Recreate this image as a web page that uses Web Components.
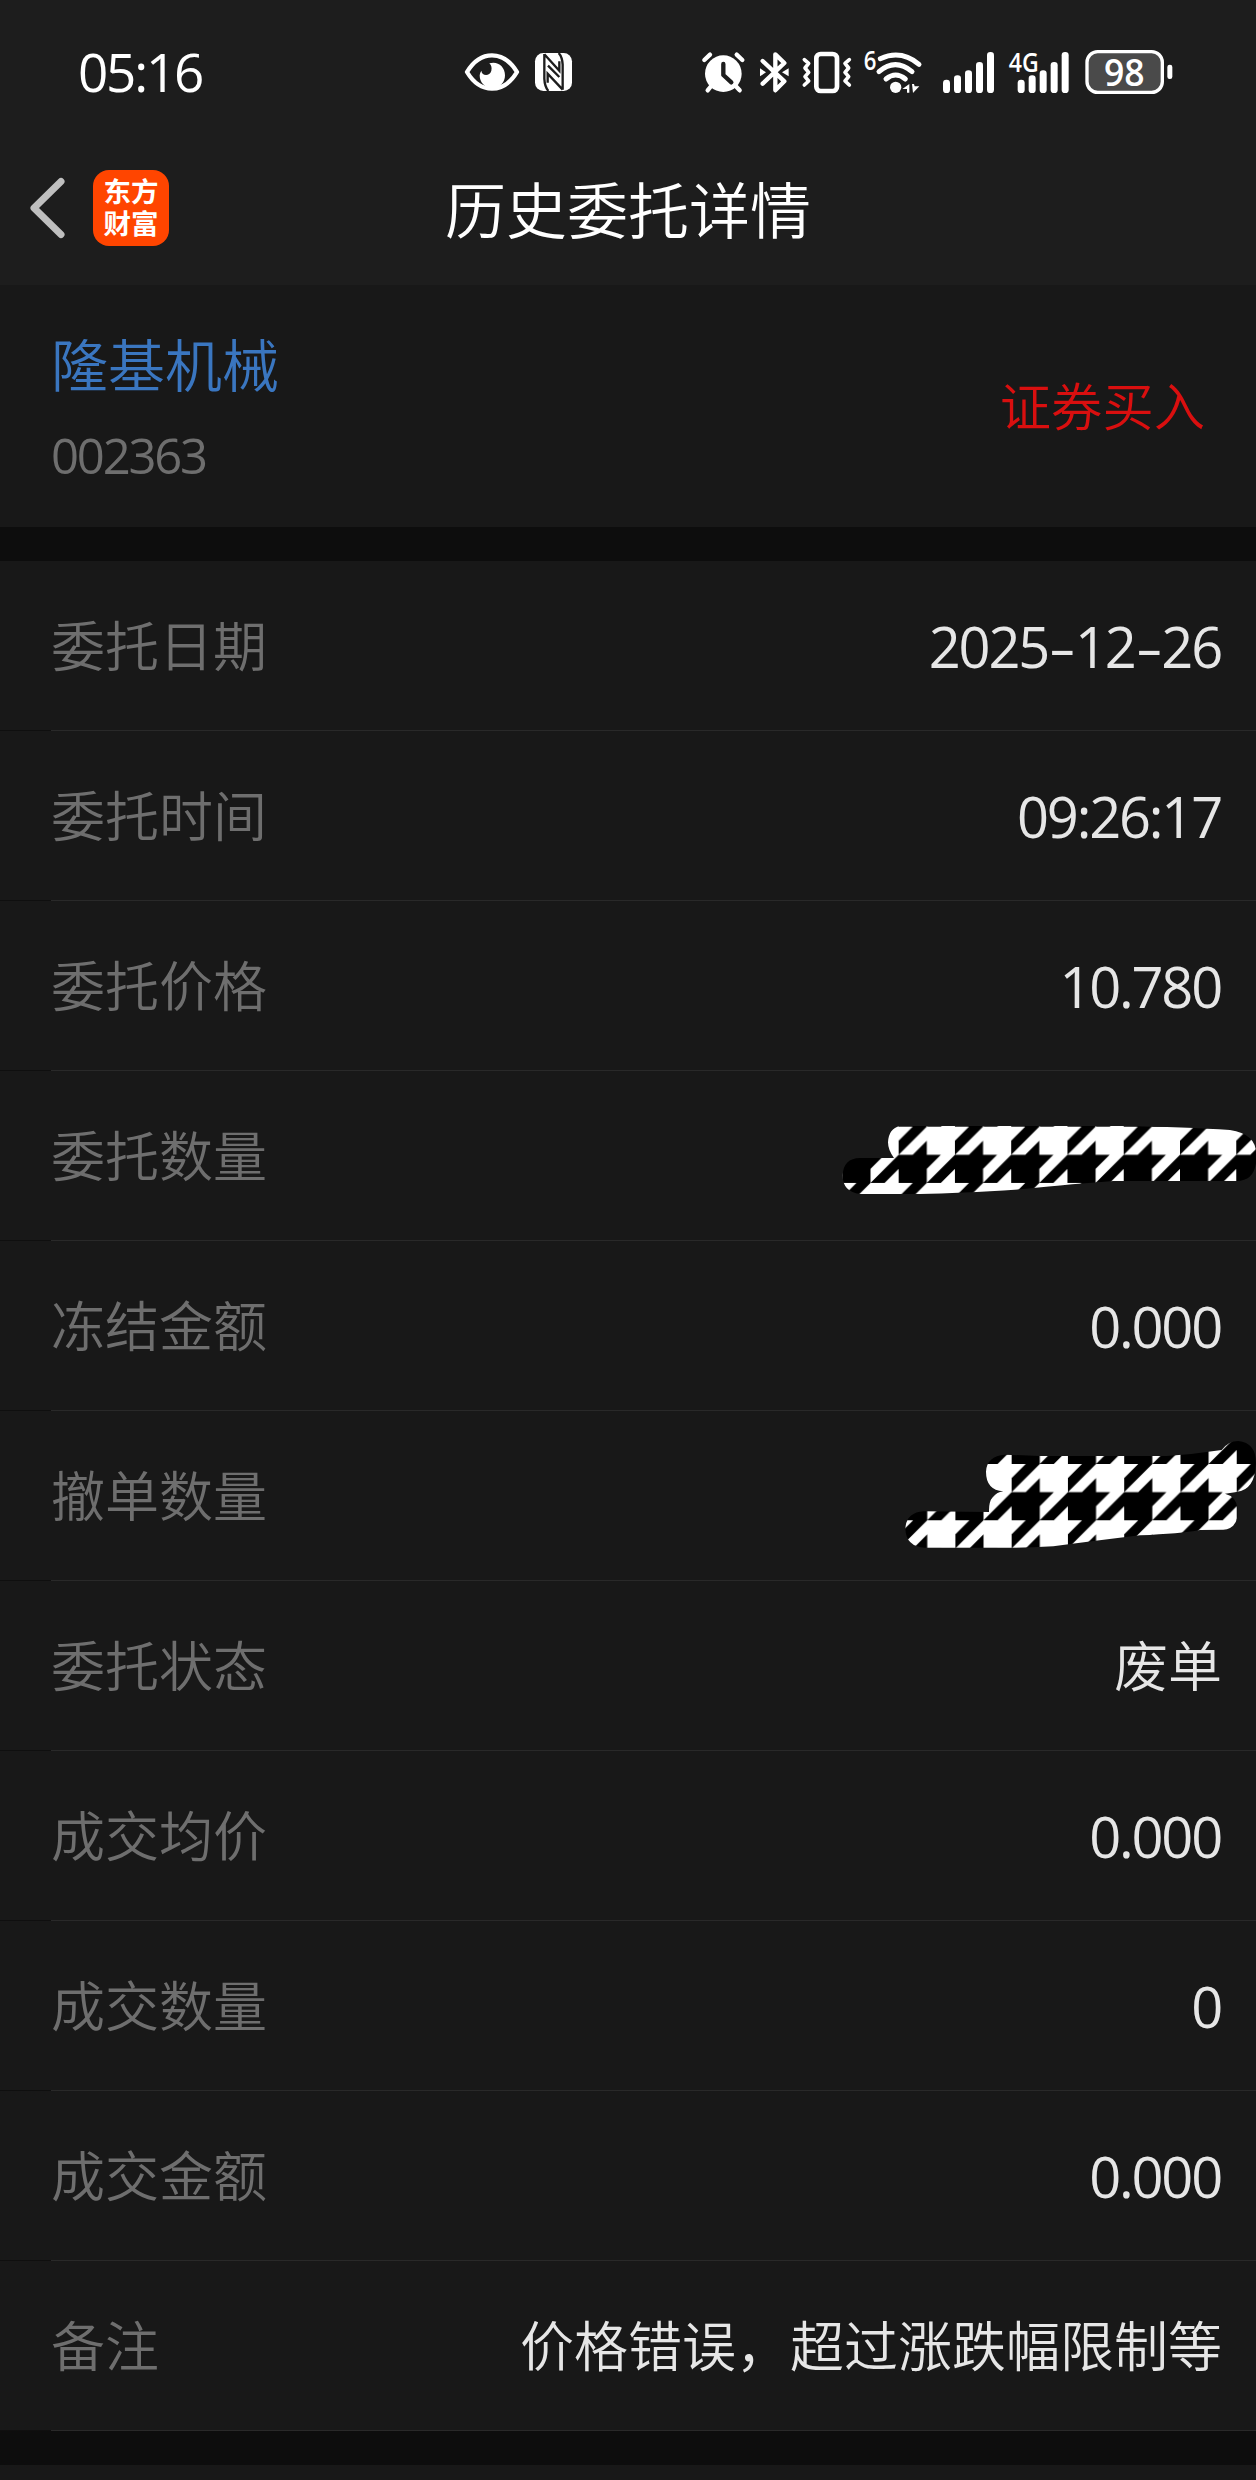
<!DOCTYPE html>
<html lang="zh-CN">
<head>
<meta charset="utf-8">
<title>历史委托详情</title>
<style>
	body {
		margin: 0;
		background: #181818;
		color: #e6e6e6;
		font-family: "Noto Sans CJK SC", sans-serif;
		font-weight: 350;
	}
	.dash {
		display: inline-block;
		transform: scaleX(1.5);
		padding: 0 6px 0 5px;
	}
</style>
</head>
<body>
<order-page>
	<status-bar time="05:16" battery="98"></status-bar>
	<nav-bar>历史委托详情</nav-bar>
	<stock-head code="002363">
		隆基机械
		<span slot="side">证券买入</span>
	</stock-head>
	<section-gap></section-gap>
	<detail-row label="委托日期" numeric>2025<span class="dash">-</span>12<span class="dash">-</span>26</detail-row>
	<detail-row label="委托时间" numeric>09:26:17</detail-row>
	<detail-row label="委托价格" numeric>10.780</detail-row>
	<detail-row label="委托数量"><brush-mask shape="amount"></brush-mask></detail-row>
	<detail-row label="冻结金额" numeric>0.000</detail-row>
	<detail-row label="撤单数量"><brush-mask shape="cancel"></brush-mask></detail-row>
	<detail-row label="委托状态">废单</detail-row>
	<detail-row label="成交均价" numeric>0.000</detail-row>
	<detail-row label="成交数量" numeric>0</detail-row>
	<detail-row label="成交金额" numeric>0.000</detail-row>
	<detail-row label="备注">价格错误，超过涨跌幅限制等</detail-row>
	<section-gap></section-gap>
</order-page>

<script>
class BaseElement extends HTMLElement {
	constructor() {
		super();
		this.attachShadow({ mode: 'open' });
	}

	connectedCallback() {
		this.render();
	}

	render() {
		this.shadowRoot.innerHTML = `
			<style>${this.css()}</style>
			${this.template()}
		`;
	}

	css() {
		return '';
	}

	template() {
		return '<slot></slot>';
	}
}

class OrderPage extends BaseElement {
	css() {
		return `
			:host {
				display: flex;
				flex-direction: column;
				width: 1256px;
				height: 2480px;
				overflow: hidden;
				background: #181818;
			}
		`;
	}
}

class StatusBar extends BaseElement {
	css() {
		return `
			:host {
				display: flex;
				align-items: center;
				flex: none;
				height: 144px;
				box-sizing: border-box;
				padding: 0 83px 0 78px;
				background: #1d1d1d;
				color: #fff;
			}
			.time {
				width: 387px;
				font-family: "Open Sans", sans-serif;
				font-size: 53px;
				line-height: 60px;
				font-weight: 500;
				letter-spacing: -2.200px;
				white-space: nowrap;
			}
			.group {
				display: flex;
				align-items: center;
			}
			.left {
				gap: 16px;
			}
			.right {
				margin-left: auto;
			}
			svg {
				display: block;
				flex: none;
				overflow: visible;
				fill: #fff;
			}
			text {
				font-family: "Open Sans", sans-serif;
				font-weight: 600;
			}
		`;
	}

	// Every glyph is drawn on a grid of three units to the pixel.
	bars(x) {
		const tops = [148, 135, 120, 95, 65];
		return tops.map((top, i) =>
			`<rect x="${x + i * 33}" y="${top}" width="21" height="${188 - top}" rx="10"/>`
		).join('');
	}

	template() {
		return `
			<div class="time">${this.getAttribute('time')}</div>
			<div class="group left">
				<svg width="54" height="38" viewBox="30 40 162 112">
					<path d="M36 96C57 61 84 46 111 46S165 61 186 96C165 131 138 146 111 146S57 131 36 96Z" fill="none" stroke="#fff" stroke-width="13" stroke-linejoin="round"/>
					<path d="M103 70C128 62 150 80 150 106C150 126 136 144 112 144S74 126 74 106Q75 98 79 92C80 108 104 110 109 92Q112 78 103 70Z"/>
				</svg>
				<svg width="37" height="38" viewBox="240 39 111 114">
					<rect x="240" y="39" width="111" height="114" rx="25"/>
					<path d="M268 42V116Q269 140 280 153M268 43L313 92V64M323 149V74Q322 51 311 39M323 149L278 101V128M279 77L313 111" fill="none" stroke="#1d1d1d" stroke-width="7"/>
				</svg>
			</div>
			<div class="group right">
				<svg width="44" height="42" viewBox="66 62 132 126">
					<circle cx="130" cy="130" r="55"/>
					<path d="M73 89L90 73M187 89L170 73M96 164L83 180M164 164L179 180" stroke="#fff" stroke-width="13" stroke-linecap="round"/>
					<path d="M130 101V134L154 156" fill="none" stroke="#1d1d1d" stroke-width="13" stroke-linecap="round" stroke-linejoin="round"/>
				</svg>
				<svg width="28" height="42" viewBox="240 62 84 126" style="margin-left:14px">
					<path d="M248 92L313 153L286 180V72L313 98L248 160" fill="none" stroke="#fff" stroke-width="13" stroke-linecap="round" stroke-linejoin="round"/>
					<path d="M240 114L258 126L240 138ZM326 114L306 126L326 138Z"/>
				</svg>
				<svg width="50" height="42" viewBox="365 62 150 126" style="margin-left:14px">
					<rect x="408" y="71" width="62" height="111" rx="13" fill="none" stroke="#fff" stroke-width="14"/>
					<path d="M372 88L385 99L374 113L385 126L374 139L385 152L372 164M507 88L494 99L505 113L494 126L505 139L494 152L507 164" fill="none" stroke="#fff" stroke-width="11" stroke-linecap="round" stroke-linejoin="round"/>
				</svg>
				<svg width="58" height="42" viewBox="552 62 174 126" style="margin-left:12px">
					<text x="551" y="119" font-size="80" textLength="38" lengthAdjust="spacingAndGlyphs">6</text>
					<path d="M601 85Q663 57 717 102M597 124Q646 82 696 124M618 146Q647 122 676 146" fill="none" stroke="#fff" stroke-width="15" stroke-linecap="round"/>
					<circle cx="647" cy="171" r="17"/>
					<path d="M667 176L688 161V187H681V176ZM696 161H702L704 168H718L699 188Z"/>
				</svg>
				<svg width="51" height="42" viewBox="39 62 153 126" style="margin-left:21px">
					${this.bars(39)}
				</svg>
				<svg width="60" height="42" viewBox="239 62 180 126" style="margin-left:15px">
					<text x="238" y="124" font-size="80" textLength="90" lengthAdjust="spacingAndGlyphs">4G</text>
					${this.bars(265)}
				</svg>
				<svg width="88" height="44" viewBox="464 60 264 132" style="margin-left:16px">
					<rect x="470" y="65" width="226" height="122" rx="32" fill="#4a4a4a" stroke="#fff" stroke-width="10"/>
					<rect x="711" y="104" width="15" height="43" rx="7"/>
					<text x="582" y="168" font-size="113" text-anchor="middle" textLength="122" lengthAdjust="spacingAndGlyphs">${this.getAttribute('battery')}</text>
				</svg>
			</div>
		`;
	}
}

class NavBar extends BaseElement {
	css() {
		return `
			:host {
				display: grid;
				grid-template-columns: 200px 1fr 200px;
				align-items: center;
				flex: none;
				height: 141px;
				box-sizing: border-box;
				padding-bottom: 13px;
				background: #1d1d1d;
				color: #fff;
			}
			.back {
				display: flex;
				align-items: center;
				gap: 27px;
				padding-left: 29px;
			}
			.app {
				width: 76px;
				height: 76px;
				box-sizing: border-box;
				padding-top: 7px;
				border-radius: 16px;
				background: #ff4500;
				/* Liberation first: its shorter line box keeps the two lines apart */
				font-family: "Liberation Sans", "Noto Sans CJK SC", sans-serif;
				font-size: 27.500px;
				line-height: 32px;
				font-weight: 700;
				text-align: center;
			}
			.title {
				padding-bottom: 1px;
				font-size: 61px;
				line-height: 80px;
				text-align: center;
				white-space: nowrap;
			}
		`;
	}

	template() {
		return `
			<div class="back">
				<svg width="37" height="62" viewBox="0 0 37 62">
					<path d="M32 4.500L5 31L32 57.500" fill="none" stroke="#bfbfbf" stroke-width="7" stroke-linecap="round" stroke-linejoin="round"/>
				</svg>
				<div class="app">东方<br>财富</div>
			</div>
			<div class="title"><slot></slot></div>
		`;
	}
}

class StockHead extends BaseElement {
	css() {
		return `
			:host {
				display: flex;
				align-items: center;
				justify-content: space-between;
				flex: none;
				height: 242px;
				box-sizing: border-box;
				padding: 0 52px 4px 51px;
			}
			.main {
				display: flex;
				flex-direction: column;
				gap: 23px;
				padding-top: 2px;
			}
			.name {
				font-size: 57px;
				line-height: 76px;
				color: #3a76c0;
			}
			.code {
				font-family: "Open Sans", sans-serif;
				font-size: 49px;
				line-height: 64px;
				letter-spacing: -2.200px;
				font-weight: 400;
				color: #6e6e6e;
			}
			.side {
				font-size: 51.300px;
				line-height: 70px;
				margin-right: -1px;
				color: #d90f0f;
			}
		`;
	}

	template() {
		return `
			<div class="main">
				<div class="name"><slot></slot></div>
				<div class="code">${this.getAttribute('code')}</div>
			</div>
			<div class="side"><slot name="side"></slot></div>
		`;
	}
}

class SectionGap extends BaseElement {
	css() {
		return `
			:host {
				display: block;
				flex: none;
				height: 34px;
				background: #0d0d0d;
			}
		`;
	}

	template() {
		return '';
	}
}

class DetailRow extends BaseElement {
	css() {
		return `
			:host {
				display: flex;
				flex-direction: column;
				flex: none;
				height: 170px;
			}
			.row {
				display: flex;
				align-items: center;
				justify-content: space-between;
				flex: 1;
				padding: 0 34px 3px 51px;
				font-size: 54px;
				line-height: 80px;
				white-space: nowrap;
			}
			.label {
				color: #6e6e6e;
			}
			:host([numeric]) .value {
				padding-top: 3px;
				font-family: "Open Sans", sans-serif;
				font-size: 56px;
				font-weight: 400;
				letter-spacing: -2.200px;
				margin-right: 1px;
			}
			.line {
				height: 1px;
				background: linear-gradient(to right, #0f0f0f 51px, #292929 51px);
			}
		`;
	}

	template() {
		return `
			<div class="row">
				<div class="label">${this.getAttribute('label')}</div>
				<div class="value"><slot></slot></div>
			</div>
			<div class="line"></div>
		`;
	}
}

// Houndstooth brush stroke that covers a private value
class BrushMask extends BaseElement {
	static get shapes() {
		return {
			amount: {
				width: 436,
				height: 110,
				origin: [236, 80],
				path: 'M240 78H900Q1100 81 1230 90Q1308 102 1308 160V190Q1300 243 1250 243H880Q700 257 600 268Q420 280 300 282H120Q68 276 68 226Q70 175 120 174H222Q204 150 204 127Q206 85 240 78Z'
			},
			cancel: {
				width: 376,
				height: 130,
				origin: [395, 102],
				path: 'M375 74L480 78H860Q940 73 1025 60Q1045 33 1075 33Q1128 38 1128 100Q1125 180 1070 186L1035 191Q1070 200 1072 235V262Q1065 297 1030 299L960 300Q900 311 780 316Q640 333 520 349Q450 353 400 353H135Q78 350 76 297Q78 248 130 244L327 246Q325 190 370 184Q318 180 318 125Q320 78 375 74Z'
			}
		};
	}

	css() {
		return `
			:host {
				display: block;
				margin-right: -34px;
				padding-top: 2px;
			}
			svg {
				display: block;
			}
		`;
	}

	template() {
		const { width, height, origin, path } = BrushMask.shapes[this.getAttribute('shape')];
		return `
			<svg width="${width}" height="${height}" viewBox="0 0 ${width * 3} ${height * 3}">
				<defs>
					<pattern id="tooth" width="4" height="4" patternUnits="userSpaceOnUse"
						patternTransform="translate(${origin.join(' ')}) scale(42.200)">
						<rect width="4" height="4" fill="#fff"/>
						<path d="M1 0H2L0 2V1ZM2 1V2H1ZM0 2H2V4H0ZM2 2H3L2 3ZM4 2V3L3 4H2Z"/>
					</pattern>
				</defs>
				<path d="${path}" fill="url(#tooth)"/>
			</svg>
		`;
	}
}

customElements.define('order-page', OrderPage);
customElements.define('status-bar', StatusBar);
customElements.define('nav-bar', NavBar);
customElements.define('stock-head', StockHead);
customElements.define('section-gap', SectionGap);
customElements.define('detail-row', DetailRow);
customElements.define('brush-mask', BrushMask);
</script>
</body>
</html>
